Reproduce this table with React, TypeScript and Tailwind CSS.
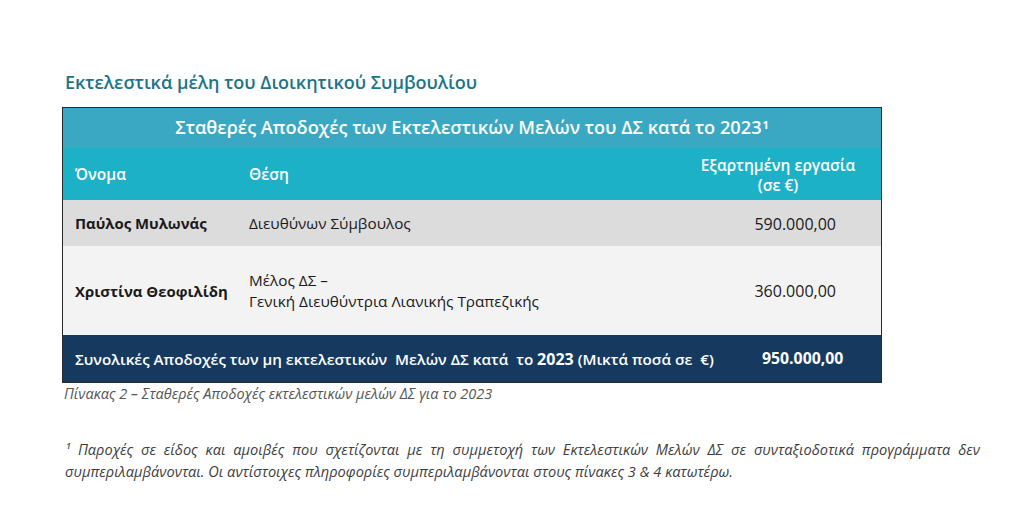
import React from "react";

export default function App() {
  const body = { fontFamily: '"Open Sans", "Noto Sans", sans-serif' };
  return (
    <div className="w-[1024px] h-[511px] bg-white overflow-hidden" style={body}>
      <div className="pl-[65px] pt-[69px]">
        <h1 className="text-[18px] leading-[26px] font-semibold text-[#1d7488]">
          Εκτελεστικά μέλη του Διοικητικού Συμβουλίου
        </h1>
      </div>
      <div className="ml-[62px] mt-[12px] w-[820px] border border-[#2a2a2a]">
        <div className="h-[40px] bg-[#3aa8c3] flex items-center justify-center text-white font-semibold text-[18.2px]">
          Σταθερές Αποδοχές των Εκτελεστικών Μελών του ΔΣ κατά το 2023
          <sup className="text-[11px] font-bold ml-[1px] relative top-[-3px]">1</sup>
        </div>
        <div className="h-[52px] bg-[#1db1c7] grid grid-cols-[174px_1fr_200px] items-center text-white font-semibold text-[15.5px] pt-[2px]">
          <div className="pl-[12px]">Όνομα</div>
          <div className="pl-[12px]">Θέση</div>
          <div className="text-center leading-[20px] pr-[6px]">
            Εξαρτημένη εργασία
            <br />
            (σε €)
          </div>
        </div>
        <div className="h-[46px] bg-[#dcdcdc] grid grid-cols-[174px_1fr_200px] items-center text-[#1a1a1a] text-[15.3px] pt-[1px]">
          <div className="pl-[12px] font-bold text-[14.9px]">Παύλος Μυλωνάς</div>
          <div className="pl-[12px]">Διευθύνων Σύμβουλος</div>
          <div className="text-right pr-[45px] text-[16px]">590.000,00</div>
        </div>
        <div className="h-[89px] bg-[#f3f3f3] grid grid-cols-[174px_1fr_200px] items-center text-[#1a1a1a] text-[15.3px] pt-[1px]">
          <div className="pl-[12px] font-bold text-[14.9px]">Χριστίνα Θεοφιλίδη</div>
          <div className="pl-[12px] leading-[21px]">
            Μέλος ΔΣ –
            <br />
            Γενική Διευθύντρια Λιανικής Τραπεζικής
          </div>
          <div className="text-right pr-[45px] text-[16px]">360.000,00</div>
        </div>
        <div className="h-[47px] bg-[#163a5f] flex items-center text-white font-semibold text-[15.2px] pt-[1px]">
          <div className="pl-[12px] w-[686px] whitespace-pre">
            {"Συνολικές Αποδοχές των μη εκτελεστικών  Μελών ΔΣ κατά  το "}
            <span className="font-bold text-[16px]">2023</span>
            {" (Μικτά ποσά σε  €)"}
          </div>
          <div className="font-bold text-[15.8px] pl-[13px]">950.000,00</div>
        </div>
      </div>
      <div className="ml-[64px] mt-[1px] text-[14.5px] italic text-[#555] leading-[20px]">
        Πίνακας 2 – Σταθερές Αποδοχές εκτελεστικών μελών ΔΣ για το 2023
      </div>
      <p className="ml-[65px] mt-[34px] w-[915px] text-[14.6px] italic text-[#3d3d3d] leading-[22px] text-justify">
        ¹ Παροχές σε είδος και αμοιβές που σχετίζονται με τη συμμετοχή των Εκτελεστικών Μελών ΔΣ σε συνταξιοδοτικά προγράμματα δεν συμπεριλαμβάνονται. Οι αντίστοιχες πληροφορίες συμπεριλαμβάνονται στους πίνακες 3 &amp; 4 κατωτέρω.
      </p>
    </div>
  );
}
